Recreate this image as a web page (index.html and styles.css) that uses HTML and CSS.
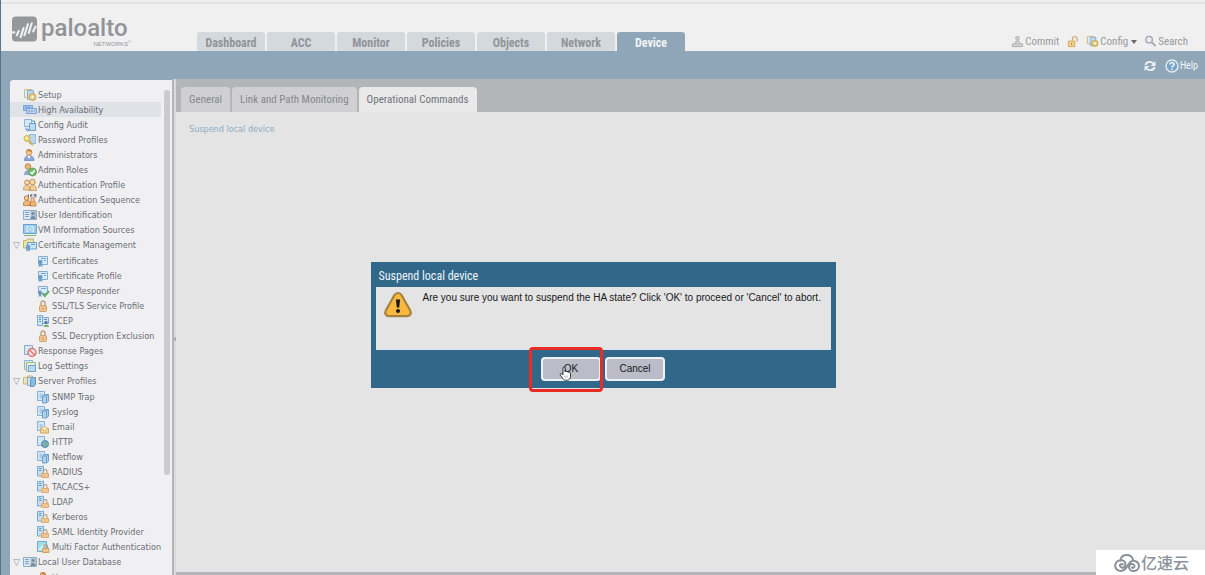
FILE: index.html
```
<!DOCTYPE html>
<html lang="en">
<head>
<meta charset="utf-8">
<title>Device - High Availability</title>
<link rel="stylesheet" href="styles.css">
</head>
<body>
<svg class="defs" aria-hidden="true">
  <symbol id="setup" viewBox="0 0 14 14"><path d="M1.500 1.500h7v8h-7z" fill="#e3f0f8" stroke="#d7b870"/><path d="M4.500 2.500h6v9h-6z" fill="#bcdcf1" stroke="#84aed2"/><circle cx="9.500" cy="9" r="3.200" fill="#e5d49b" stroke="#cfb060" stroke-width="1.400"/><circle cx="9.500" cy="9" r="1" fill="#fff"/></symbol>
  <symbol id="ha" viewBox="0 0 14 14"><path d="M.500 2.500h9v5h-9z" fill="#9dbfe8" stroke="#7da3d8"/><path d="M3.500 5.500h10v5h-10z" fill="#b9d3f1" stroke="#7da3d8"/><path d="M2 4.500h6M5 8h7" stroke="#6f98d0" stroke-dasharray="2 1"/></symbol>
  <symbol id="audit" viewBox="0 0 14 14"><path d="M1.500 1.500h7v7h-7z" fill="#d5e8f5" stroke="#8fb3d1"/><path d="M6.500 5.500h6v7h-6z" fill="#bcdcf1" stroke="#6f9fc8"/><path d="M3 9.500v2.500h3M4.500 10.500 6 12l-1.500 1.500M9 3h2.500v2" fill="none" stroke="#5f93c1"/></symbol>
  <symbol id="key" viewBox="0 0 14 14"><path d="M6.500 1.500h6v9h-6z" fill="#b5d9ef" stroke="#8ebbdc"/><circle cx="4" cy="5.500" r="3" fill="#f2dc83" stroke="#cfae4b"/><circle cx="3.200" cy="4.800" r=".9" fill="#fff"/><path d="m6 7.500 4 4.500M8 9.500 7 11M9.500 11l-1 1.300" stroke="#d6b54d" stroke-width="1.600"/></symbol>
  <symbol id="user" viewBox="0 0 14 14"><path d="M1.500 12.500c0-3.500 2-5 4.500-5s5 1.500 5 5z" fill="#8ba6d8" stroke="#7089bf" stroke-width=".8"/><path d="m4.500 8 1.500 3L7.500 8z" fill="#fff"/><circle cx="6" cy="4.500" r="2.900" fill="#f0c590" stroke="#c98f4d" stroke-width=".8"/><path d="M3 4.200C3 0 9 0 9 4.200 7 3.800 5.500 3.600 4.500 2.800z" fill="#c78a48"/></symbol>
  <symbol id="role" viewBox="0 0 14 14"><circle cx="5" cy="3.500" r="2.800" fill="#e5b877" stroke="#ae7b42" stroke-width=".8"/><path d="M1 12c0-3.500 2-5 4.500-5S9 9 9 12z" fill="#94abd1"/><circle cx="9.500" cy="9" r="4" fill="#73b96d" stroke="#539d52" stroke-width=".8"/><path d="m7.300 9 1.700 1.800 2.700-3.500" fill="none" stroke="#fff" stroke-width="1.400"/></symbol>
  <symbol id="users" viewBox="0 0 14 14"><path d="M.500 12c0-3 1-5 3.500-5s3.500 2 3.500 5zM6 12.500c0-3.500 1.500-5.500 4-5.500s3.500 2 3.500 5.500z" fill="#f0cf9b" stroke="#ca945a" stroke-width=".8"/><circle cx="4" cy="4.500" r="2.400" fill="#f7dcae" stroke="#c48b50"/><circle cx="9.500" cy="4" r="2.700" fill="#f7dcae" stroke="#c48b50"/></symbol>
  <symbol id="seq" viewBox="0 0 14 14"><path d="M.500 12.500v-3l2-2h3l2 2v3zM7 13v-3l1.500-2h3l1.500 2v3z" fill="#ecb778" stroke="#bd7d3d" stroke-width=".8"/><circle cx="3.500" cy="5" r="2.200" fill="#f5d0a0" stroke="#bd7d3d"/><circle cx="9.500" cy="7" r="1.900" fill="#f5d0a0" stroke="#bd7d3d" stroke-width=".8"/><path d="M5.500 1v3M7.500 1.500h1.500v1H7.500v1.500h2M10.500 1.500H13V4h-2.500M11 2.600h2" fill="none" stroke="#5f6670" stroke-width=".8"/></symbol>
  <symbol id="ident" viewBox="0 0 14 14"><path d="M.500 2.500h13v9H.500z" fill="#dae6ef" stroke="#90adc6"/><path d="M7.500 3h5.500v8H7.500z" fill="#b4c3cf"/><path d="M2 4.500h4M2 6.500h4M2 8.500h4" stroke="#7da5cb"/><circle cx="10" cy="5.500" r="1.600" fill="#798da0"/><path d="M7.500 11c0-4 5-4 5 0z" fill="#798da0"/></symbol>
  <symbol id="vm" viewBox="0 0 14 14"><path d="M.500 1.500h13v9H.500z" fill="#9dcdec" stroke="#6aa2cd"/><path d="M3 3h8v6H3z" fill="#cbe7f7"/><path d="M5 6.500c0-3 4-3 4 0s-4 2-4 0" fill="none" stroke="#8abce0"/><path d="M1 12.500h12" stroke="#86b36f"/></symbol>
  <symbol id="certs" viewBox="0 0 14 14"><path d="M.500 2.500h3l1-1.500h6v9h-10z" fill="#eee2a6" stroke="#b9b86b"/><path d="M4.500 4.500h9v6.500h-9z" fill="#c9e3f4" stroke="#6ba0c9"/><path d="M8 6.500h4" stroke="#6ba0c9"/><circle cx="5" cy="9" r="2.300" fill="#6aa0cb"/><path d="m3.500 10.500-.5 3 2-1 2 1-.500-3z" fill="#6aa0cb"/></symbol>
  <symbol id="cert" viewBox="0 0 14 14"><path d="M1.500 2.500h9v8h-9z" fill="#d9ebf7" stroke="#83aed2"/><path d="M4 4.500h5M7 6.500h2" stroke="#73a2ca"/><circle cx="3.500" cy="8" r="2.100" fill="#6496c3"/><path d="m2 9.500-.5 3.500 2-1 2 1L5 9.500z" fill="#6f9fc9"/></symbol>
  <symbol id="ocsp" viewBox="0 0 14 14"><path d="M1.500 2.500h9v7h-9z" fill="#d9ebf7" stroke="#83aed2"/><path d="M4 4.500h5" stroke="#73a2ca"/><circle cx="3" cy="8.500" r="2" fill="#6496c3"/><path d="M2 10l-.5 3L3 12l1.500 1-.500-3z" fill="#6496c3"/><path d="m5.500 9.500 2.300 2.500L12 7" fill="none" stroke="#67ad67" stroke-width="2"/></symbol>
  <symbol id="lock" viewBox="0 0 14 14"><path d="M4 7V4.500c0-3.500 4-3.500 4 0V7" fill="none" stroke="#bda687" stroke-width="1.500"/><rect x="2.500" y="6.500" width="7" height="6" rx="1" fill="#eec391" stroke="#d3a066"/><path d="M6 8.500v2" stroke="#c3925c"/></symbol>
  <symbol id="scep" viewBox="0 0 14 14"><path d="M.500 1.500h5v10h-5zM5.500 3.500h6v6h-6z" fill="#d2e6f4" stroke="#7da9cf"/><path d="M2 3.500h2M2 5.500h2M2 7.500h2M7 5.500h3" stroke="#5f8fbf"/><circle cx="9" cy="8.500" r="1.700" fill="#5780b5"/><path d="M6.500 13c0-3.500 5.500-3.500 5.500 0z" fill="#7cb071"/></symbol>
  <symbol id="deny" viewBox="0 0 14 14"><path d="M1.500 1.500h8v9h-8z" fill="#d5e8f5" stroke="#86add0"/><circle cx="9" cy="8.500" r="3.900" fill="#f7e7e6" stroke="#d87575" stroke-width="1.500"/><path d="m6.300 5.800 5.400 5.400" stroke="#d87575" stroke-width="1.500"/></symbol>
  <symbol id="log" viewBox="0 0 14 14"><path d="M1.500 1.500h8v9h-8z" fill="#dceaf0" stroke="#8db6cb"/><path d="M3.500 3.500h9v9h-9z" fill="#e9efd7" stroke="#9cba8d"/><path d="M5.500 6.500h7v6h-7z" fill="#b8daf0" stroke="#72a3c9"/></symbol>
  <symbol id="servers" viewBox="0 0 14 14"><path d="M.500 3.500h3l1-1.500h5v8h-9z" fill="#efe6b4" stroke="#c8ba77"/><path d="M4.500 3.500h5v8h-5z" fill="#d4e7f5" stroke="#80abcf"/><path d="m7.500 5.500 2-2h3v7l-2 2h-3z" fill="#8ebbdc" stroke="#5e94be"/></symbol>
  <symbol id="server" viewBox="0 0 14 14"><path d="M.500 1.500h7v9h-7z" fill="#d4e7f5" stroke="#88b2d5"/><path d="M2.500 3.500h3v5h-3z" fill="#a9cce7"/><path d="m5.500 6 2-1.500h4V11l-2 2h-4z" fill="#add2ed" stroke="#6f9fc9"/><path d="M5.500 6h4v7M9.500 6l2-1.500" fill="none" stroke="#6f9fc9"/></symbol>
  <symbol id="mail" viewBox="0 0 14 14"><path d="M.500 1.500h7v9h-7z" fill="#d4e7f5" stroke="#88b2d5"/><path d="M2.500 4h3v4h-3z" fill="#a9cce7"/><path d="M3.500 8.500h8v4.500h-8z" fill="#f4d79e" stroke="#d3a75c"/><path d="m4 8.500 3.500 2.500L11 8.500l-3.500-2z" fill="#fbeccb" stroke="#d3a75c" stroke-width=".8"/></symbol>
  <symbol id="http" viewBox="0 0 14 14"><path d="M.500 1.500h7v9h-7z" fill="#d4e7f5" stroke="#88b2d5"/><circle cx="8" cy="9" r="3.500" fill="#76a8ca" stroke="#5588ae"/><path d="M6 7.500c2-2 3 0 2 1s1 2-1 3zM9.500 8l2 .5-1.500 2z" fill="#86ba87"/></symbol>
  <symbol id="srvlock" viewBox="0 0 14 14"><path d="M.500 1.500h4l2-.5v9l-2 1h-4z" fill="#c3dff3" stroke="#78a9d1"/><path d="M2 3.500h2.500M2 5.500h2.500" stroke="#5f96c4"/><path d="M6.500 8V6.500c0-2.500 3.500-2.500 3.500 0V8" fill="none" stroke="#b6a084" stroke-width="1.200"/><path d="M4.500 8.500h7v4h-7z" fill="#efc58f" stroke="#dcae76"/></symbol>
  <symbol id="mfa" viewBox="0 0 14 14"><path d="M.500 1.500h9v10h-9z" fill="#9fe0eb" stroke="#72adc5"/><path d="m1 10 4-5 4 5z" fill="#d4f1f4"/><path d="M7 8V6.500c0-2.500 3.500-2.500 3.500 0V8" fill="none" stroke="#b6a084" stroke-width="1.200"/><path d="M5.500 8.500h6.500v4H5.500z" fill="#efc58f" stroke="#d2a065"/></symbol>
  <symbol id="warn" viewBox="0 0 30 28"><path d="M11.500 4c1.500-2.700 5.500-2.700 7 0l8.700 15.500c1.500 2.700-.2 5.700-3.200 5.700H6c-3 0-4.700-3-3.200-5.700z" fill="#fbb83e" stroke="#a5813f" stroke-width="2.200"/><path d="M12.900 8.500h4.200l-.9 8h-2.400z" fill="#171717"/><circle cx="15" cy="20" r="2" fill="#171717"/></symbol>
</svg>
<div class="page">
  <header class="top">
    <div class="brand">
      <svg class="mark" viewBox="0 0 26 26"><rect width="26" height="26" rx="4" fill="#96979b"/><g fill="none" stroke="#f0f0f1" stroke-linecap="round" stroke-width="2.200"><path d="M1 16.500h1.500M5 19.500l2-4.500M9 21.500l3-9.500M13 19.500 16.500 8M17.500 17 20.500 7M22 15.500l2.500-5"/></g></svg>
      <div class="word"><span class="name">paloalto</span><span class="networks">NETWORKS<sup>®</sup></span></div>
    </div>
    <nav class="tabs">
      <a href="#">Dashboard</a><a href="#">ACC</a><a href="#">Monitor</a><a href="#">Policies</a><a href="#">Objects</a><a href="#">Network</a><a href="#" class="on">Device</a>
    </nav>
    <div class="tools">
      <a href="#"><svg viewBox="0 0 14 14"><g fill="#d3d3d4" stroke="#aaaaad"><circle cx="7" cy="3.500" r="2"/><path d="M4.500 8.500c0-3 5-3 5 0M1.500 9.500h11v3h-11z"/></g></svg>Commit</a>
      <a href="#" aria-label="Locks"><svg viewBox="0 0 14 14"><path d="M7 6V4c0-3 5-3 5 0v3" fill="none" stroke="#d1af7b" stroke-width="1.500"/><path d="M2.500 6.500h7v6h-7z" fill="#f3d28b" stroke="#d0a762"/><path d="M6 8.500v2" stroke="#a67f45"/></svg></a>
      <a href="#"><svg viewBox="0 0 14 14"><use href="#setup"/></svg>Config<span class="caret"></span></a>
      <a href="#"><svg viewBox="0 0 14 14"><circle cx="5.500" cy="5" r="3.500" fill="#e7edf2" stroke="#a0a7b2" stroke-width="1.500"/><path d="m8.500 8 4 4" stroke="#a0a7b2" stroke-width="2"/></svg>Search</a>
    </div>
  </header>
  <div class="bar">
    <button type="button" aria-label="Refresh"><svg viewBox="0 0 14 14"><path d="M2.500 6c.5-3.500 6-4 8-1.500M11.500 8c-.5 3.500-6 4-8 1.500" fill="none" stroke="#e9f0f5" stroke-width="2"/><path d="M12.500 2v5h-5zM1.500 12V7h5z" fill="#e9f0f5"/></svg></button>
    <button type="button"><svg viewBox="0 0 14 14"><circle cx="7" cy="7" r="6" fill="#79a5c8" stroke="#e3edf4" stroke-width="1.400"/><path d="M5 5.500c0-2.500 4-2.500 4 0C9 7 7 6.700 7 8.500M7 9.700v1.500" fill="none" stroke="#fff" stroke-width="1.400"/></svg>Help</button>
  </div>
  <div class="body">
    <aside class="side">
      <ul class="tree">
        <li><a href="#"><svg><use href="#setup"/></svg>Setup</a></li>
        <li class="on"><a href="#"><svg><use href="#ha"/></svg>High Availability</a></li>
        <li><a href="#"><svg><use href="#audit"/></svg>Config Audit</a></li>
        <li><a href="#"><svg><use href="#key"/></svg>Password Profiles</a></li>
        <li><a href="#"><svg><use href="#user"/></svg>Administrators</a></li>
        <li><a href="#"><svg><use href="#role"/></svg>Admin Roles</a></li>
        <li><a href="#"><svg><use href="#users"/></svg>Authentication Profile</a></li>
        <li><a href="#"><svg><use href="#seq"/></svg>Authentication Sequence</a></li>
        <li><a href="#"><svg><use href="#ident"/></svg>User Identification</a></li>
        <li><a href="#"><svg><use href="#vm"/></svg>VM Information Sources</a></li>
        <li class="open"><a href="#"><svg><use href="#certs"/></svg>Certificate Management</a></li>
        <li class="child"><a href="#"><svg><use href="#cert"/></svg>Certificates</a></li>
        <li class="child"><a href="#"><svg><use href="#cert"/></svg>Certificate Profile</a></li>
        <li class="child"><a href="#"><svg><use href="#ocsp"/></svg>OCSP Responder</a></li>
        <li class="child"><a href="#"><svg><use href="#lock"/></svg>SSL/TLS Service Profile</a></li>
        <li class="child"><a href="#"><svg><use href="#scep"/></svg>SCEP</a></li>
        <li class="child"><a href="#"><svg><use href="#lock"/></svg>SSL Decryption Exclusion</a></li>
        <li><a href="#"><svg><use href="#deny"/></svg>Response Pages</a></li>
        <li><a href="#"><svg><use href="#log"/></svg>Log Settings</a></li>
        <li class="open"><a href="#"><svg><use href="#servers"/></svg>Server Profiles</a></li>
        <li class="child"><a href="#"><svg><use href="#server"/></svg>SNMP Trap</a></li>
        <li class="child"><a href="#"><svg><use href="#server"/></svg>Syslog</a></li>
        <li class="child"><a href="#"><svg><use href="#mail"/></svg>Email</a></li>
        <li class="child"><a href="#"><svg><use href="#http"/></svg>HTTP</a></li>
        <li class="child"><a href="#"><svg><use href="#server"/></svg>Netflow</a></li>
        <li class="child"><a href="#"><svg><use href="#srvlock"/></svg>RADIUS</a></li>
        <li class="child"><a href="#"><svg><use href="#srvlock"/></svg>TACACS+</a></li>
        <li class="child"><a href="#"><svg><use href="#srvlock"/></svg>LDAP</a></li>
        <li class="child"><a href="#"><svg><use href="#srvlock"/></svg>Kerberos</a></li>
        <li class="child"><a href="#"><svg><use href="#srvlock"/></svg>SAML Identity Provider</a></li>
        <li class="child"><a href="#"><svg><use href="#mfa"/></svg>Multi Factor Authentication</a></li>
        <li class="open"><a href="#"><svg><use href="#ident"/></svg>Local User Database</a></li>
        <li class="child"><a href="#"><svg><use href="#user"/></svg>Users</a></li>
      </ul>
      <div class="scroll"><div class="thumb"></div></div>
    </aside>
    <div class="split"><span></span></div>
    <main class="main">
      <nav class="subtabs"><a href="#">General</a><a href="#">Link and Path Monitoring</a><a href="#" class="on">Operational Commands</a></nav>
      <section class="content"><a href="#">Suspend local device</a></section>
    </main>
  </div>
</div>
<div class="dialog" role="dialog" aria-labelledby="dialog-title">
  <h2 id="dialog-title">Suspend local device</h2>
  <div class="message"><svg><use href="#warn"/></svg><p>Are you sure you want to suspend the HA state? Click 'OK' to proceed or 'Cancel' to abort.</p></div>
  <div class="actions">
    <div class="ring"><button type="button">OK</button>
      <svg class="hand" viewBox="0 0 13 15"><path d="M4 9V2c0-1.600 2-1.600 2 0v4c.4-.9 1.800-.8 2 .1.500-.7 1.700-.5 1.800.4.700-.5 1.700-.1 1.700.8v3.200c0 2-1.300 3.700-3.300 3.700H6.500c-1.200 0-2-.6-2.700-1.700L1.300 9c-.7-1.200.8-2 1.600-1.200z" fill="#fff" stroke="#222" stroke-width=".9"/><path d="M6 9.500v2M8 9.500v2" stroke="#777" stroke-width=".7"/></svg>
    </div>
    <button type="button">Cancel</button>
  </div>
</div>
<div class="watermark">
  <svg viewBox="0 0 26 20"><g fill="none" stroke="#8c929b" stroke-width="2" stroke-linecap="round"><path d="M6.500 7.500C7 .500 17 0 19 6.500"/><path d="M9 11.500c-2-1.500-4 .500-2.500 2.200 2 2 5 .300 5-2.200 0-5-7-5.500-9.300-2C-.500 14 3 18.500 7 18c5-.5 6-5 9-8.500 3-3.500 9-1 9 3.500 0 6-10 7-10 1 0-3.500 5.500-4 5.500-.800 0 1.800-2 2-2.500 1.200"/></g></svg>
  <span lang="zh">亿速云</span>
</div>
</body>
</html>
```
FILE: styles.css
```
* { box-sizing: border-box; }
body { margin: 0; overflow: hidden; font-family: "DejaVu Sans Condensed", "DejaVu Sans", sans-serif; font-size: 9px; color: #6b6d72; }
a { color: inherit; text-decoration: none; }
button { font: inherit; cursor: pointer; }
.defs { position: absolute; width: 0; height: 0; }
.page { display: flex; flex-direction: column; height: 100vh; background: #8ea6b8; border-left: 1px solid #557590; }

.top { flex: none; display: flex; align-items: flex-end; height: 51px; background: #f0f0f1 linear-gradient(#e2e2e3, #e2e2e3) 0 2px / 100% 2px no-repeat; }
.brand { display: flex; gap: 4px; width: 196px; height: 35px; padding-left: 11px; }
.mark { flex: none; width: 25px; height: 26px; }
.word { display: flex; flex-direction: column; width: 90px; color: #929397; }
.name { font: 500 24px/24px "Roboto", sans-serif; }
.networks { align-self: flex-end; font: 6px/8px "Liberation Sans", sans-serif; }
.networks sup { font-size: 4px; line-height: 4px; }
.tabs { display: flex; gap: 2px; }
.tabs a { width: 68px; height: 19px; border-radius: 3px 3px 0 0; background: #d4d9dd; color: #919499; font: bold 12px/22px "Roboto Condensed", sans-serif; text-align: center; }
.tabs .on { background: #8ea6b8; color: #f0f3f6; }
.tools { display: flex; align-items: center; gap: 7px; height: 19px; margin-left: auto; margin-right: 17px; color: #96989c; font: 11px/19px "Roboto Condensed", sans-serif; }
.tools a { display: flex; align-items: center; gap: 1px; }
.tools svg { width: 13px; height: 13px; }
.caret { margin-left: 2px; border: 3px solid transparent; border-top: 4px solid #66686c; border-bottom: 0; }

.bar { flex: none; display: flex; align-items: center; justify-content: flex-end; gap: 8px; height: 28px; padding: 1px 7px 0 0; }
.bar button { display: flex; align-items: center; gap: 1px; padding: 0; border: 0; background: none; color: #f4f7f9; font: 10px/14px "Roboto Condensed", sans-serif; }
.bar svg { width: 14px; height: 14px; }

.body { flex: 1; display: flex; min-height: 0; margin-left: 9px; }
.side { flex: none; display: flex; width: 162px; margin-top: 1px; border-radius: 3px 0 0 0; background: #f0f0f2; overflow: hidden; }
.tree { flex: 1; margin: 0; padding: 7px 0 0; list-style: none; white-space: nowrap; }
.tree li { display: flex; align-items: center; height: 15px; padding-left: 13px; }
.tree a { display: flex; align-items: center; gap: 1px; }
.tree svg { width: 14px; height: 14px; }
.tree .on { background: #dfe2e7; }
.tree .child { padding-left: 27px; }
.tree .open { height: 16px; padding-left: 3px; }
.tree .open::before { content: "▽"; width: 10px; font: 9px/15px "DejaVu Sans", sans-serif; color: #8f9196; }
.scroll { width: 12px; padding: 10px 2px 0 3px; }
.thumb { height: 385px; border-radius: 4px; background: #cbcbcd; }
.split { flex: none; display: flex; align-items: center; width: 4px; background: #dadadc; border-left: 2px solid #b3b5ba; }
.split span { width: 2px; height: 4px; margin-top: 24px; border-radius: 1px; background: #aaacb0; }
.main { flex: 1; display: flex; flex-direction: column; min-width: 0; background: #b3b5b9; }
.subtabs { flex: none; display: flex; align-items: flex-end; gap: 2px; height: 33px; padding-left: 5px; }
.subtabs a { height: 25px; padding: 0 8px; border-radius: 4px 4px 0 0; background: #d0d0d2; color: #85878c; font: 11px/26px "Roboto Condensed", sans-serif; }
.subtabs .on { background: #e9e9ea; color: #707277; }
.content { flex: 1; margin-bottom: 3px; padding: 11px 13px; background: #e4e4e4; color: #8fabc3; line-height: 12px; }

.dialog { position: absolute; top: 262px; left: calc(50% - 232px); width: 465px; padding: 0 5px 1px; background: #31688a; color: #17181a; font-family: "Liberation Sans", sans-serif; font-size: 10px; }
.dialog h2 { height: 25px; margin: 0; padding: 2px 3px 0; color: #eef4f8; font: 12px/25px "Roboto Condensed", sans-serif; }
.message { display: flex; gap: 10px; height: 63px; padding: 4px 7px; background: #e4e4e4; border-bottom: 1px solid #d4e5ef; }
.message svg { flex: none; width: 30px; height: 28px; }
.message p { margin: 0; line-height: 14px; white-space: nowrap; }
.actions { display: flex; justify-content: center; align-items: center; gap: 4px; height: 37px; }
.actions button { width: 60px; height: 24px; padding: 0; border: 2px solid #edf2f7; border-radius: 4px; background: #bbbcc7; color: #17181a; font-size: 10px; }
.ring { position: relative; display: flex; }
.ring::after { content: ""; position: absolute; inset: -10px -2px -11px -12px; border: 3px solid #e82c24; border-radius: 4px; pointer-events: none; }
.hand { position: absolute; left: 18px; top: 9px; width: 13px; height: 15px; }

.watermark { position: absolute; right: 0; bottom: 0; display: flex; align-items: center; gap: 1px; width: 109px; height: 25px; padding-left: 18px; background: #fff; color: #8c929b; font: 500 16px/25px "Noto Sans CJK SC", sans-serif; }
.watermark svg { width: 26px; height: 20px; }
```
